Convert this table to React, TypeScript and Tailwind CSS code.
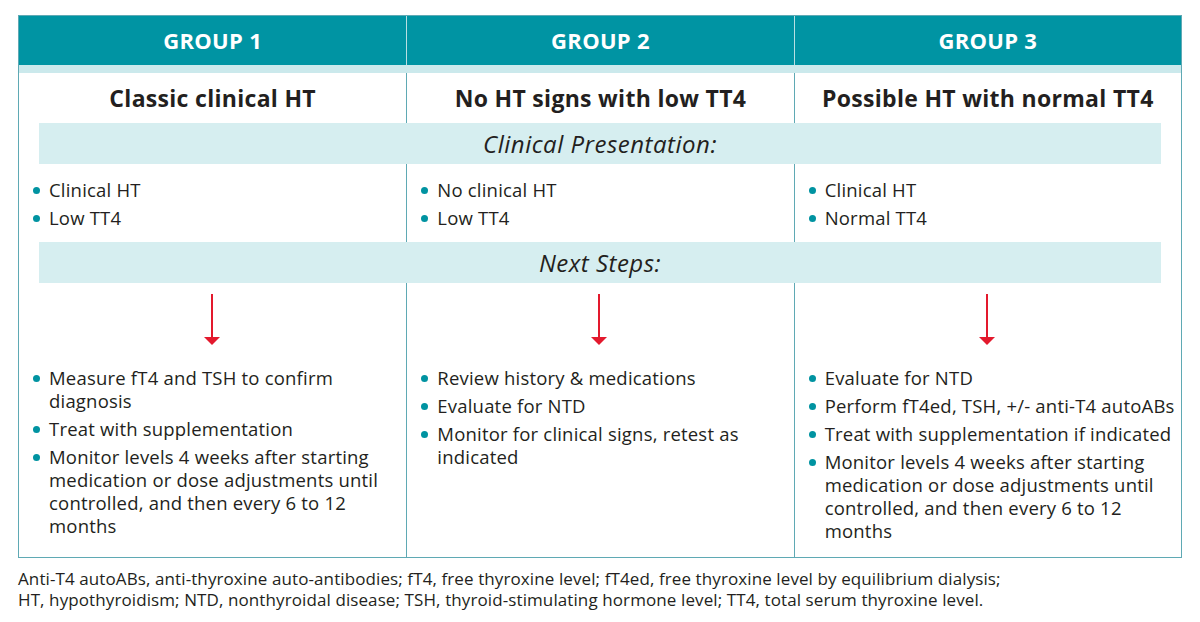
import React from "react";

const groups = [
  {
    name: "GROUP 1",
    title: "Classic clinical HT",
    presentation: ["Clinical HT", "Low TT4"],
    steps: [
      "Measure fT4 and TSH to confirm diagnosis",
      "Treat with supplementation",
      "Monitor levels 4 weeks after starting medication or dose adjustments until controlled, and then every 6 to 12 months",
    ],
  },
  {
    name: "GROUP 2",
    title: "No HT signs with low TT4",
    presentation: ["No clinical HT", "Low TT4"],
    steps: [
      "Review history & medications",
      "Evaluate for NTD",
      "Monitor for clinical signs, retest as indicated",
    ],
  },
  {
    name: "GROUP 3",
    title: "Possible HT with normal TT4",
    presentation: ["Clinical HT", "Normal TT4"],
    steps: [
      "Evaluate for NTD",
      "Perform fT4ed, TSH, +/- anti-T4 autoABs",
      "Treat with supplementation if indicated",
      "Monitor levels 4 weeks after starting medication or dose adjustments until controlled, and then every 6 to 12 months",
    ],
  },
];

function BulletList({ items }: { items: string[] }) {
  return (
    <ul className="flex flex-col gap-[5px]">
      {items.map((item) => (
        <li key={item} className="flex items-start">
          <span className="mt-[9px] ml-[14px] mr-[9px] h-[7px] w-[7px] shrink-0 rounded-full bg-[#0093a1]" />
          <span className="leading-[23px]">{item}</span>
        </li>
      ))}
    </ul>
  );
}

function Band({ label }: { label: string }) {
  return (
    <div className="px-[20px]">
      <div className="flex h-[41px] items-center justify-center bg-[#d6eef0] text-[24px] italic tracking-[0.5px]">
        {label}
      </div>
    </div>
  );
}

function DownArrow() {
  return (
    <svg width="18" height="52" viewBox="0 0 18 52" className="mx-auto">
      <line x1="9" y1="0" x2="9" y2="44" stroke="#e3192d" strokeWidth="2" />
      <polygon points="1,43 17,43 9,51" fill="#e3192d" />
    </svg>
  );
}

export default function App() {
  return (
    <div
      className="h-[622px] w-[1200px] bg-white px-[18px] pt-[15px] text-[#231f20]"
      style={{ fontFamily: "'Open Sans', Lato, sans-serif" }}
    >
      <div className="w-[1164px] border border-[#5fa9b4]">
        <div className="grid h-[49px] grid-cols-3 bg-[#0094a3] text-[22px] font-bold tracking-[0.3px] text-white">
          {groups.map((g, i) => (
            <div
              key={g.name}
              className={`flex items-center justify-center ${i > 0 ? "border-l border-[#b9dfe3]" : ""}`}
            >
              {g.name}
            </div>
          ))}
        </div>
        <div className="h-[8px] bg-[#cbe9ec]" />
        <div className="grid h-[50px] grid-cols-3 text-[23px] font-bold tracking-[0.3px]">
          {groups.map((g, i) => (
            <div
              key={g.title}
              className={`flex items-center justify-center ${i > 0 ? "border-l border-[#5fa9b4]" : ""}`}
            >
              {g.title}
            </div>
          ))}
        </div>
        <Band label="Clinical Presentation:" />
        <div className="grid h-[78px] grid-cols-3 text-[18.5px] tracking-[0.2px]">
          {groups.map((g, i) => (
            <div
              key={g.name}
              className={`pt-[14px] ${i > 0 ? "border-l border-[#5fa9b4]" : ""}`}
            >
              <BulletList items={g.presentation} />
            </div>
          ))}
        </div>
        <Band label="Next Steps:" />
        <div className="grid min-h-[274px] grid-cols-3 text-[18.5px] tracking-[0.2px]">
          {groups.map((g, i) => (
            <div
              key={g.name}
              className={`flex flex-col pt-[11px] pr-[2px] ${i > 0 ? "border-l border-[#5fa9b4]" : ""}`}
            >
              <DownArrow />
              <div className="mt-[20px]">
                <BulletList items={g.steps} />
              </div>
            </div>
          ))}
        </div>
      </div>
      <p className="mt-[10px] text-[17px] leading-[21px] tracking-[0.1px]">
        Anti-T4 autoABs, anti-thyroxine auto-antibodies; fT4, free thyroxine level; fT4ed, free thyroxine level by
        equilibrium dialysis;
        <br />
        HT, hypothyroidism; NTD, nonthyroidal disease; TSH, thyroid-stimulating hormone level; TT4, total serum
        thyroxine level.
      </p>
    </div>
  );
}
